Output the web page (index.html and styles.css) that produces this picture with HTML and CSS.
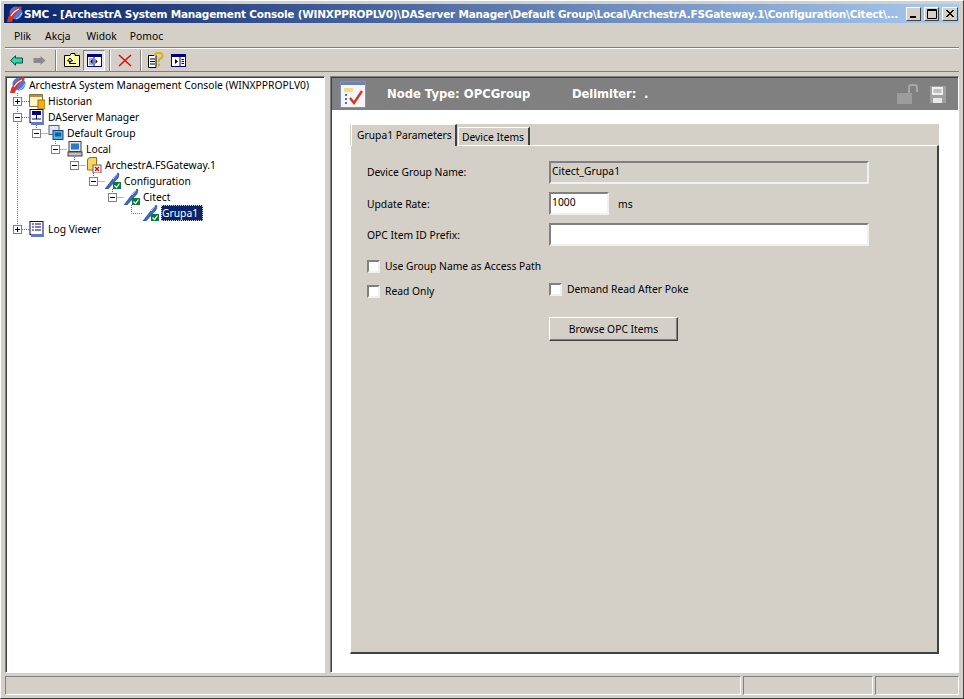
FILE: index.html
```html
<!DOCTYPE html>
<html lang="pl">
<head>
<meta charset="utf-8">
<title>SMC</title>
<link rel="stylesheet" href="styles.css">
</head>
<body>
<svg class="sprite" width="0" height="0" aria-hidden="true">
  <symbol id="wand" viewBox="0 0 16 16">
    <path d="M0 16 L10 3 L13 0 L14 1 L13 5 L3 16Z" fill="#3a6bc8" stroke="#1c3a80" stroke-width=".6"/>
    <path d="M8 6 L12 1" stroke="#cfe0ff" stroke-width="1"/>
    <rect x="8" y="9" width="8" height="7" fill="#0a7a3c"/>
    <path d="M9.500 12.500 L11.500 14.500 L14.500 10.500" stroke="#fff" stroke-width="1.200" fill="none"/>
  </symbol>
  <symbol id="globe" viewBox="0 0 16 16">
    <circle cx="9" cy="7" r="6.500" fill="#4a78dc"/>
    <path d="M0 16 Q1 6 13 0 L15 2 Q7 7 5 16Z" fill="#d9342b"/>
    <path d="M4 10 Q7 5 12 3" stroke="#fff" stroke-width="1.200" fill="none"/>
    <path d="M9 13 Q13 11 15 7" stroke="#c8d8ff" fill="none"/>
  </symbol>
  <symbol id="server" viewBox="0 0 16 16">
    <rect x="1" y="0.500" width="13" height="13" fill="#fff" stroke="#000080"/>
    <rect x="3" y="2" width="9" height="4" fill="#000080"/>
    <path d="M7.500 6 V10 M3 10 H12" stroke="#000080"/>
    <rect x="2" y="13" width="13" height="3" fill="#5f78c8"/>
  </symbol>
  <symbol id="folder-up" viewBox="0 0 16 14">
    <path d="M.5 2.500 H6 L7 .5 H11 V2.500 H15.500 V13.500 H.5Z" fill="#ffffa0" stroke="#000"/>
    <path d="M6 5 L3.500 8 H5.500 V10.500 H12 M6 5 L8.500 8 H6.500 V9.500" stroke="#000" fill="none"/>
  </symbol>
</svg>

<div class="window">
  <header class="titlebar">
    <svg class="title-icon" width="16" height="16"><use href="#globe"/></svg>
    <span class="title-text">SMC - [ArchestrA System Management Console (WINXPPROPLV0)\DAServer Manager\Default Group\Local\ArchestrA.FSGateway.1\Configuration\Citect\...</span>
    <div class="winbtns">
      <span class="winbtn"><svg width="13" height="12"><rect x="3" y="8" width="6" height="2" fill="#000"/></svg></span>
      <span class="winbtn"><svg width="13" height="12"><path d="M2.500 1.500 H11.500 V10.500 H2.500Z M2.500 2.500 H11.500" fill="none" stroke="#000"/></svg></span>
      <span class="winbtn close"><svg width="14" height="12"><path d="M3 2 L10 9 M4 2 L11 9 M10 2 L3 9 M11 2 L4 9" stroke="#000"/></svg></span>
    </div>
  </header>

  <nav class="menubar">
    <span class="menu-item m-plik">Plik</span>
    <span class="menu-item m-akcja">Akcja</span>
    <span class="menu-item m-widok">Widok</span>
    <span class="menu-item">Pomoc</span>
  </nav>

  <div class="toolbar">
    <span class="tool"><svg width="13" height="11"><path d="M.5 5.500 L5.500 .8 V3 H12.500 V8 H5.500 V10.200Z" fill="#2fd8a8" stroke="#0a4a3a"/></svg></span>
    <span class="tool"><svg width="13" height="11"><path d="M12.500 5.500 L7.500 1 V3 H.5 V8 H7.500 V10Z" fill="#8a8a8a"/></svg></span>
    <span class="tool-sep"></span>
    <span class="tool"><svg width="16" height="14"><use href="#folder-up"/></svg></span>
    <span class="tool tool-active"><svg width="15" height="13"><rect x=".5" y=".5" width="14" height="12" fill="#fff" stroke="#000080" stroke-width="1"/><rect x="1" y="1" width="13" height="2" fill="#000080"/><path d="M7 3 V12" stroke="#000080"/><rect x="2" y="4" width="4" height="7" fill="#9db0e0"/><path d="M5.500 5 L3.500 7.500 L5.500 10Z M8.500 5 L10.500 7.500 L8.500 10Z" fill="#000"/></svg></span>
    <span class="tool-sep sep-tight"></span>
    <span class="tool"><svg width="14" height="13"><path d="M1 1 L13 12 M13 1 L1 12" stroke="#d81010" stroke-width="1.600"/></svg></span>
    <span class="tool-sep sep-tight"></span>
    <span class="tool"><svg width="16" height="16"><path d="M.5 3.500 H8 V15.500 H.5Z" fill="#fff" stroke="#000"/><path d="M2 7 H7 M2 9.500 H7 M2 12 H7" stroke="#000"/><path d="M7 4 Q7 .8 10.500 .8 Q14.500 .8 14.500 4 Q14.500 6 11 7.500 V10 M11 11.500 V14" fill="none" stroke="#e0b000" stroke-width="2"/></svg></span>
    <span class="tool"><svg width="15" height="13"><rect x=".5" y=".5" width="14" height="12" fill="#fff" stroke="#000080"/><rect x="1" y="1" width="13" height="2" fill="#000080"/><path d="M9 3 V12" stroke="#000080"/><path d="M4 5 L7 7.500 L4 10Z" fill="#000"/><path d="M10.500 5.500 H13 M10.500 7.500 H13 M10.500 9.500 H13" stroke="#000080"/></svg></span>
  </div>

  <main class="workspace">
    <aside class="tree">
      <svg class="tree-lines" width="150" height="160" aria-hidden="true">
        <path d="M9.500 16 V152 M14 24.500 H21 M14 40.500 H21 M14 152.500 H21 M28.500 48 V52 M32.500 56.500 H40 M47.500 64 V68 M51.500 72.500 H59 M66.500 80 V84 M70.500 88.500 H78 M85.500 96 V100 M89.500 104.500 H97 M104.500 112 V116 M108.500 120.500 H116 M123.500 128 V136.500 H135" stroke="#707070" stroke-dasharray="1 1" fill="none"/>
      </svg>
      <div class="row lv0"><svg class="ico" width="16" height="16"><use href="#globe"/></svg><span class="label">ArchestrA System Management Console (WINXPPROPLV0)</span></div>
      <div class="row lv1"><span class="exp plus"></span><svg class="ico" width="16" height="16"><path d="M.5 1.500 H13.500 V13.500 H.5Z" fill="#fff6c8" stroke="#807040"/><path d="M1 2 H13 V4 H1Z" fill="#b89040"/><rect x="9" y="7" width="7" height="9" fill="#f0b020" stroke="#a07000"/></svg><span class="label">Historian</span></div>
      <div class="row lv1"><span class="exp minus"></span><svg class="ico" width="16" height="16"><use href="#server"/></svg><span class="label">DAServer Manager</span></div>
      <div class="row lv2"><span class="exp minus"></span><svg class="ico" width="16" height="16"><rect x="1" y=".5" width="10" height="9" fill="#dfe8f4" stroke="#506080"/><rect x="5" y="5.500" width="10" height="9" fill="#58b0e0" stroke="#204080"/><rect x="7" y="7.500" width="6" height="4" fill="#1060a0"/></svg><span class="label">Default Group</span></div>
      <div class="row lv3"><span class="exp minus"></span><svg class="ico" width="16" height="16"><rect x="2" y=".5" width="12" height="10" fill="#e8e8e8" stroke="#404040"/><rect x="4" y="2.500" width="8" height="6" fill="#2878d0"/><rect x="1" y="11" width="14" height="4" fill="#c0c0c0" stroke="#404040"/></svg><span class="label">Local</span></div>
      <div class="row lv4"><span class="exp minus"></span><svg class="ico" width="16" height="16"><path d="M1.500 3 Q1.500 .5 5 .5 H10.500 V13 H1.500Z" fill="#f4d860" stroke="#907020"/><rect x="7" y="8" width="8" height="8" fill="#fff" stroke="#a04040"/><path d="M9 10 L13 14 M13 10 L9 14" stroke="#c01010" stroke-width="1.400"/></svg><span class="label">ArchestrA.FSGateway.1</span></div>
      <div class="row lv5"><span class="exp minus"></span><svg class="ico" width="16" height="16"><use href="#wand"/></svg><span class="label">Configuration</span></div>
      <div class="row lv6"><span class="exp minus"></span><svg class="ico" width="16" height="16"><use href="#wand"/></svg><span class="label">Citect</span></div>
      <div class="row lv7"><svg class="ico" width="16" height="16"><use href="#wand"/></svg><span class="label selected">Grupa1</span></div>
      <div class="row lv1"><span class="exp plus"></span><svg class="ico" width="16" height="16"><rect x="1" y=".5" width="13" height="13" fill="#fff" stroke="#000080"/><path d="M3 3 H5 M6 3 H12 M3 6 H5 M6 6 H12 M3 9 H5 M6 9 H12" stroke="#000080"/><rect x="2" y="13" width="13" height="3" fill="#5f78c8"/></svg><span class="label">Log Viewer</span></div>
    </aside>

    <section class="detail">
      <div class="node-header">
        <svg class="node-icon" width="26" height="27"><rect x=".5" y=".5" width="25" height="26" fill="#f4f6fc" stroke="#8090c0"/><rect x="1" y="1" width="24" height="3" fill="#7080b8"/><rect x="4" y="7" width="9" height="4" fill="#f0e080"/><path d="M5 14 h2 M5 18 h2 M5 22 h2" stroke="#304080" stroke-width="1.500"/><path d="M10 17 L14 22 L22 10" fill="none" stroke="#d83818" stroke-width="2.400"/></svg>
        <span class="node-type">Node Type: OPCGroup</span>
        <span class="node-delim">Delimiter:&nbsp; .</span>
        <svg class="lock" width="21" height="20"><path d="M0 9 H15 V20 H0Z" fill="#9c9c9c"/><path d="M12 9 V3 Q12 1 15 1 H17 Q20 1 20 3 V8" fill="none" stroke="#a8a8a8" stroke-width="2"/></svg>
        <svg class="save" width="16" height="17"><rect x="0" y="0" width="16" height="17" fill="#a0a0a0"/><rect x="2" y="1" width="11" height="8" fill="#f0f0f0"/><path d="M3.500 4 H11.500 M3.500 6 H11.500" stroke="#909090"/><rect x="3" y="12" width="9" height="5" fill="#e8e8e8"/></svg>
      </div>
      <div class="detail-body">
        <div class="tabs">
          <div class="tab-strip">
            <span class="tab tab-on">Grupa1 Parameters</span>
            <span class="tab tab-off">Device Items</span>
          </div>
          <div class="tab-page">
            <div class="field">
              <span class="field-label field-top">Device Group Name:</span>
              <span class="input input-wide input-dis">Citect_Grupa1</span>
            </div>
            <div class="field">
              <span class="field-label">Update Rate:</span>
              <span class="input input-rate">1000</span>
              <span class="unit">ms</span>
            </div>
            <div class="field">
              <span class="field-label">OPC Item ID Prefix:</span>
              <span class="input input-wide"></span>
            </div>
            <label class="check check-first"><span class="box"></span>Use Group Name as Access Path</label>
            <div class="check-pair">
              <label class="check col-left"><span class="box"></span>Read Only</label>
              <label class="check col-right"><span class="box"></span>Demand Read After Poke</label>
            </div>
            <button class="btn" type="button">Browse OPC Items</button>
          </div>
        </div>
      </div>
    </section>
  </main>

  <footer class="statusbar">
    <span class="pane pane-a"></span>
    <span class="pane pane-b"></span>
    <span class="pane pane-c"></span>
  </footer>
</div>
</body>
</html>
```

FILE: styles.css
```css
* { box-sizing: border-box; }
html, body { margin: 0; padding: 0; }
body {
  width: 964px; height: 699px; overflow: hidden;
  background: #d4d0c8;
  font-family: "Noto Sans", "Open Sans", sans-serif;
  font-size: 10.3px; color: #000;
}
.sprite { position: absolute; }
.window {
  width: 964px; height: 699px;
  display: flex; flex-direction: column;
  padding: 3px 4px 3px 4px;
  background: #d4d0c8;
  border-right: 1px solid #404040;
  border-bottom: 1px solid #404040;
  border-top: 1px solid #fff;
  border-left: 1px solid #fff;
}
.titlebar {
  height: 19px; margin: 0 0 1px -1px; flex: none;
  display: flex; align-items: center;
  padding: 0 1px 0 3px;
  background: linear-gradient(90deg, #0a246a, #a6caf0);
  color: #fff;
}
.title-icon { flex: none; }
.title-text {
  margin-left: 1px; flex: 1; min-width: 0; white-space: nowrap;
  font-family: "DejaVu Sans", sans-serif; font-weight: 700; font-size: 10.5px; letter-spacing: -.22px;
}
.winbtns { display: flex; gap: 3px; flex: none; }
.winbtn {
  display: block; height: 14px; width: 15px;
  background: #d4d0c8;
  border: 1px solid; border-color: #fff #404040 #404040 #fff;
}
.winbtn.close { width: 16px; }
.winbtn svg { display: block; }
.menubar {
  height: 24px; flex: none;
  display: flex; align-items: center;
  padding-left: 9px;
  border-bottom: 1px solid #808080;
}
.m-plik { margin-right: 14px; }
.m-akcja { margin-right: 16px; }
.m-widok { margin-right: 13px; }
.toolbar {
  height: 24px; flex: none;
  display: flex; align-items: center;
  border-top: 1px solid #fff;
  border-bottom: 1px solid #808080;
}
.tool { display: flex; align-items: center; justify-content: center; width: 23px; height: 21px; flex: none; }
.tool-active { width: 22px; background: #e6e4df; border: 1px solid; border-color: #808080 #fff #fff #808080; }
.tool-sep { width: 2px; height: 21px; flex: none; margin: 0 3px 0 4px; border-left: 1px solid #808080; border-right: 1px solid #fff; }
.sep-tight { margin: 0 2px 0 4px; }
.workspace {
  flex: 1; min-height: 0; display: flex; gap: 5px;
  margin-top: 4px;
}
.tree {
  position: relative; flex: none;
  width: 320px; background: #fff;
  border: 1px solid; border-color: #808080 #fff #fff #808080;
  box-shadow: inset 1px 1px 0 #404040;
  padding: 0 0 0 2px;
}
.tree-lines { position: absolute; left: 2px; top: 0; }
.row { position: relative; display: flex; align-items: center; height: 16px; white-space: nowrap; }
.lv0 { padding-left: 2px; }
.lv1 { padding-left: 5px; }
.lv2 { padding-left: 24px; }
.lv3 { padding-left: 43px; }
.lv4 { padding-left: 62px; }
.lv5 { padding-left: 81px; }
.lv6 { padding-left: 100px; }
.lv7 { padding-left: 135px; }
.ico { flex: none; }
.exp {
  position: relative; flex: none;
  width: 9px; height: 9px; margin-right: 7px;
  background: #fff; border: 1px solid #808080;
}
.exp::before { content: ""; position: absolute; left: 1px; top: 3px; width: 5px; height: 1px; background: #000; }
.plus::after { content: ""; position: absolute; left: 3px; top: 1px; width: 1px; height: 5px; background: #000; }
.label { margin-left: 2px; padding: 0 1px; line-height: 16px; }
.selected { background: #0a246a; color: #fff; outline: 1px dotted #d4d0c8; outline-offset: -1px; padding: 0 5px 0 1px; }
.detail {
  flex: 1; min-width: 0; display: flex; flex-direction: column;
  background: #fff;
  border: 1px solid; border-color: #808080 #fff #fff #808080;
  box-shadow: inset 1px 1px 0 #404040;
  padding: 1px 0 0 1px;
}
.node-header {
  height: 32px; flex: none; background: #808080; color: #fff;
  display: flex; align-items: center; padding: 0 12px 0 8px;
  font-family: "DejaVu Sans", sans-serif; font-weight: 700; font-size: 11.6px;
}
.node-icon { flex: none; }
.node-type { margin-left: 21px; width: 185px; }
.node-delim { flex: 1; letter-spacing: -.1px; }
.lock { flex: none; margin-right: 12px; }
.save { flex: none; }
.detail-body { flex: 1; padding: 14px 19px 18px 18px; display: flex; }
.tabs { flex: 1; display: flex; flex-direction: column; background: #d4d0c8; }
.tab-strip { height: 21px; flex: none; display: flex; align-items: flex-end; padding-left: 1px; position: relative; z-index: 1; }
.tab {
  display: block; background: #d4d0c8; white-space: nowrap; flex: none;
  border-top: 1px solid #fff; border-left: 1px solid #fff;
  border-right: 2px solid #404040;
}
.tab-on { width: 106px; height: 22px; padding: 3px 0 0 5px; margin-bottom: -1px; position: relative; }
.tab-off { width: 72px; height: 18px; padding: 2px 0 0 3px; margin-left: 1px; }
.tab-page {
  flex: 1; border: 1px solid; border-color: #fff #404040 #404040 #fff;
  border-right-width: 2px; border-bottom-width: 2px;
  padding: 15px 0 0 16px;
}
.field { display: flex; align-items: center; height: 23px; margin-bottom: 8px; }
.field-label { width: 182px; flex: none; }
.field-top { padding-bottom: 2px; }
.input {
  display: block; height: 23px; background: #fff; padding: 0 0 0 1px; line-height: 17px;
  border: 2px solid; border-color: #808080 #f0f0f0 #f0f0f0 #808080;
}
.input-wide { width: 320px; }
.input-rate { width: 60px; }
.input-dis { background: #d4d0c8; }
.unit { margin-left: 9px; }
.check { display: flex; align-items: center; height: 14px; }
.check-first { margin-top: 13px; }
.box {
  display: block; width: 13px; height: 13px; margin-right: 5px; flex: none;
  background: #fff; border: 2px solid; border-color: #808080 #f0f0f0 #f0f0f0 #808080;
}
.check-pair { display: flex; align-items: flex-start; margin-top: 9px; }
.col-left { width: 182px; margin-top: 2px; }
.btn {
  display: block; margin: 19px 0 0 182px; width: 129px; height: 24px;
  background: #d4d0c8; font: inherit; color: #000; padding: 0;
  border: 1px solid; border-color: #fff #404040 #404040 #fff;
  box-shadow: inset -1px -1px 0 #808080;
}
.statusbar { height: 19px; flex: none; display: flex; gap: 2px; margin-top: 3px; }
.pane { display: block; border: 1px solid; border-color: #808080 #fff #fff #808080; }
.pane-a { width: 736px; }
.pane-b { width: 130px; }
.pane-c { flex: 1; }
```
